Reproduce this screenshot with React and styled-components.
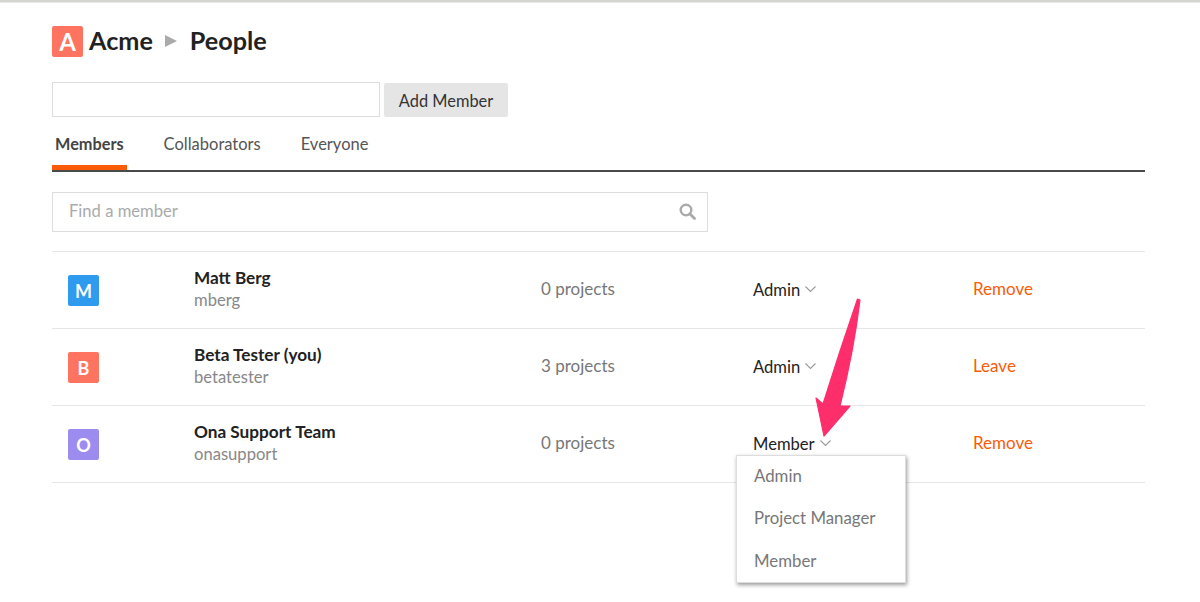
import React from 'react'
import styled, { createGlobalStyle } from 'styled-components'

const Global = createGlobalStyle`
  * { box-sizing: border-box; }
  html, body { margin: 0; padding: 0; background: #fff; }
  body {
    font-family: Lato, "Open Sans", sans-serif;
    font-size: 16.6px;
    color: #222;
    height: 602px;
    overflow: hidden;
  }
`

const Page = styled.div`
  position: relative;
  height: 602px;
  padding: 26px 55px 0 52px;
  &::before {
    content: '';
    position: absolute;
    top: 0;
    left: 0;
    right: 0;
    height: 2px;
    background: #d4d4d0;
    box-shadow: 0 1px 1px #e8e8e8;
  }
`

const Breadcrumb = styled.div`
  display: flex;
  align-items: center;
  height: 30px;
`

const LogoBox = styled.div`
  width: 31px;
  height: 31px;
  border-radius: 2px;
  background: #ff7460;
  color: #fff;
  font-size: 24px;
  font-weight: 700;
  display: flex;
  align-items: center;
  justify-content: center;
  margin-right: 6px;
`

const Crumb = styled.span`
  font-size: 25.2px;
  line-height: 30px;
  margin-top: -3px;
  font-weight: 700;
  color: #222;
`

const Sep = styled.svg`
  width: 12px;
  height: 12px;
  margin: 0 13px 0 12px;
`

const AddRow = styled.div`
  display: flex;
  align-items: flex-end;
  margin-top: 26px;
`

const AddInput = styled.input`
  width: 328px;
  height: 35px;
  border: 1px solid #ddd;
  background: #fff;
  outline: none;
`

const AddButton = styled.button`
  width: 124px;
  height: 34px;
  margin-left: 4px;
  padding: 0;
  border: 0;
  border-radius: 2px;
  background: #e5e5e5;
  color: #333;
  font: 400 16.4px Lato, sans-serif;
`

const Tabs = styled.div`
  display: flex;
  height: 55px;
  border-bottom: 2px solid #4a4a4a;
`

const Tab = styled.div`
  height: 53px;
  padding: 17px 3px 0;
  margin-right: 34px;
  line-height: 20px;
  font-size: ${({ $active }) => ($active ? '16.3px' : '16.5px')};
  font-weight: ${({ $active }) => ($active ? 700 : 400)};
  color: ${({ $active }) => ($active ? '#444' : '#555')};
  border-bottom: ${({ $active }) => ($active ? '5px solid #f95b06' : '0')};
`

const Search = styled.div`
  position: relative;
  display: flex;
  align-items: center;
  width: 656px;
  height: 40px;
  margin-top: 20px;
  padding: 0 16px 3px;
  border: 1px solid #ddd;
  color: #aaa;
`

const SearchIcon = styled.svg`
  position: absolute;
  right: 11px;
  top: 10px;
  width: 17px;
  height: 17px;
`

const List = styled.div`
  margin-top: 19px;
  border-top: 1px solid #e6e6e6;
`

const Row = styled.div`
  display: grid;
  grid-template-columns: 142px 347px 212px 220px 1fr;
  align-items: center;
  height: 77px;
  border-bottom: 1px solid #e6e6e6;
`

const Avatar = styled.div`
  width: 31px;
  height: 31px;
  margin: 1px 0 0 16px;
  border-radius: 2px;
  background: ${({ $color }) => $color};
  color: #fff;
  font-size: 18px;
  font-weight: 700;
  display: flex;
  align-items: center;
  justify-content: center;
`

const Person = styled.div`
  margin-top: -2px;
`

const Name = styled.div`
  font-size: 17.2px;
  line-height: 22px;
  font-weight: 700;
  color: #222;
`

const Handle = styled.div`
  line-height: 22px;
  color: #888;
`

const Projects = styled.div`
  font-size: 17px;
  color: #777;
  margin-top: -3px;
`

const Role = styled.div`
  position: relative;
  display: flex;
  align-items: center;
  margin-top: -1px;
  color: #222;
`

const Chevron = styled.svg`
  width: 11px;
  height: 7px;
  margin-left: 5px;
`

const Action = styled.div`
  font-size: 17px;
  color: #f95b06;
  margin-top: -3px;
`

const Menu = styled.div`
  position: absolute;
  left: -17px;
  top: 21px;
  width: 170px;
  height: 128px;
  padding: 10px 0;
  background: #fff;
  border: 1px solid #ddd;
  box-shadow: 1px 2px 4px rgba(0, 0, 0, 0.4);
  z-index: 2;
`

const MenuItem = styled.div`
  height: 42.5px;
  padding-left: 17px;
  font-size: 16.8px;
  line-height: 20px;
  color: #777;
`

const Arrow = styled.svg`
  position: absolute;
  left: 805px;
  top: 290px;
  width: 65px;
  height: 165px;
  z-index: 3;
`

const members = [
  { letter: 'M', color: '#2f9bee', name: 'Matt Berg', handle: 'mberg', projects: '0 projects', role: 'Admin', action: 'Remove' },
  { letter: 'B', color: '#ff7460', name: 'Beta Tester (you)', handle: 'betatester', projects: '3 projects', role: 'Admin', action: 'Leave' },
  { letter: 'O', color: '#9d8cf0', name: 'Ona Support Team', handle: 'onasupport', projects: '0 projects', role: 'Member', action: 'Remove', open: true },
]

const App = () => (
  <Page>
    <Global />
    <Breadcrumb>
      <LogoBox>A</LogoBox>
      <Crumb>Acme</Crumb>
      <Sep viewBox="0 0 12 12"><path d="M0 0 L12 6 L0 12 Z" fill="#aaa" /></Sep>
      <Crumb>People</Crumb>
    </Breadcrumb>
    <AddRow>
      <AddInput />
      <AddButton>Add Member</AddButton>
    </AddRow>
    <Tabs>
      <Tab $active>Members</Tab>
      <Tab>Collaborators</Tab>
      <Tab>Everyone</Tab>
    </Tabs>
    <Search>
      Find a member
      <SearchIcon viewBox="0 0 17 17">
        <circle cx="7" cy="7" r="5.3" fill="none" stroke="#aaa" strokeWidth="2.4" />
        <path d="M10.8 10.8 L15.5 15.5" stroke="#aaa" strokeWidth="2.8" strokeLinecap="round" />
      </SearchIcon>
    </Search>
    <List>
      {members.map(m => (
        <Row key={m.handle}>
          <Avatar $color={m.color}>{m.letter}</Avatar>
          <Person>
            <Name>{m.name}</Name>
            <Handle>{m.handle}</Handle>
          </Person>
          <Projects>{m.projects}</Projects>
          <Role>
            {m.role}
            <Chevron viewBox="0 0 11 7"><path d="M0.5 0.5 L5.5 5.5 L10.5 0.5" fill="none" stroke="#999" strokeWidth="1.1" /></Chevron>
            {m.open && (
              <Menu>
                <MenuItem>Admin</MenuItem>
                <MenuItem>Project Manager</MenuItem>
                <MenuItem>Member</MenuItem>
              </Menu>
            )}
          </Role>
          <Action>{m.action}</Action>
        </Row>
      ))}
    </List>
    <Arrow viewBox="0 0 65 165">
      <path d="M52.5 9 L55 10 Q49 60 35 116 L45 116 L19 146 L11 108 L18 114 Q35 60 52.5 9 Z" fill="#fe2d6c" stroke="#fe2d6c" strokeWidth="1.2" strokeLinejoin="round" />
    </Arrow>
  </Page>
)

export default App
